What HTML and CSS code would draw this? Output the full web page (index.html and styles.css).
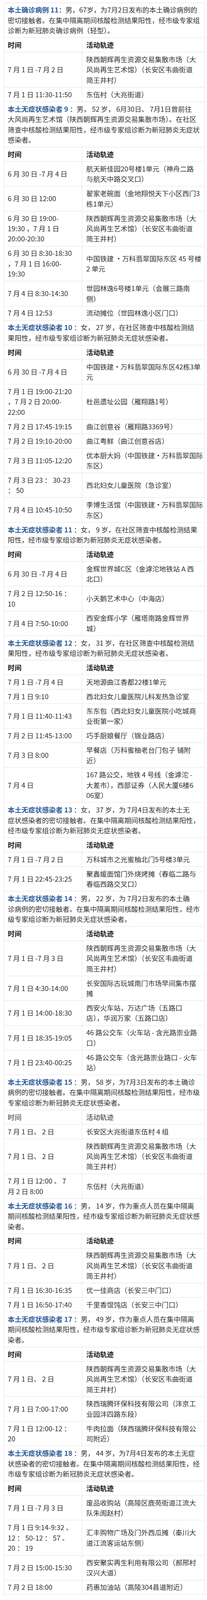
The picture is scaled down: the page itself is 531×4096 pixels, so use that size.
FILE: index.html
```html
<!DOCTYPE html>
<html lang="zh-CN">
<head>
<meta charset="utf-8">
<title>活动轨迹</title>
<link rel="stylesheet" href="styles.css">
</head>
<body>
<table class="trace">
<colgroup><col class="c-time"><col class="c-place"></colgroup>
<tbody>
<tr><td class="desc" colspan="2"><span class="tag">本土确诊病例 11</span>：男，67岁，为7月2日发布的本土确诊病例的<br>密切接触者。在集中隔离期间核酸检测结果阳性，经市级专家组<br>诊断为新冠肺炎确诊病例（轻型）。</td></tr>
<tr class="head"><td>时间</td><td class="place">活动轨迹</td></tr>
<tr><td>7 月 1 日 -7 月 2 日</td><td class="place">陕西朝辉再生资源交易集散市场（大<br>风尚再生艺术馆）（长安区韦曲街道<br>简王井村）</td></tr>
<tr><td>7 月 1 日 11:30-11:50</td><td class="place">东伍村（大兆街道）</td></tr>

<tr><td class="desc" colspan="2"><span class="tag">本土无症状感染者 9 </span>：男， 52 岁， 6月30日、 7月1日曾前往<br>大风尚再生艺术馆（陕西朝辉再生资源交易集散市场）。在社区<br>筛查中核酸检测结果阳性，经市级专家组诊断为新冠肺炎无症状<br>感染者。</td></tr>
<tr class="head"><td>时间</td><td class="place">活动轨迹</td></tr>
<tr><td>6 月 30 日 -7 月 4 日</td><td class="place">航天新佳园20号楼1单元（神舟二路<br>与航天中路交叉口）</td></tr>
<tr><td>6 月 30 日 12:00</td><td class="place">翟家老碗面（金地翔悦天下小区西门3<br>栋1单元）</td></tr>
<tr><td>6 月 30 日 19:00-<br>19:30 ，7 月 1 日<br>20:00-20:30</td><td class="place">陕西朝辉再生资源交易集散市场（大<br>风尚再生艺术馆）（长安区韦曲街道<br>简王井村）</td></tr>
<tr><td>6 月 30 日 8:30-18:30<br>，7 月 1 日 16:00-<br>19:30</td><td class="place">中国铁建 ·万科翡翠国际东区 45 号楼<br>2 单元</td></tr>
<tr><td>7 月 4 日 8:30-14:30</td><td class="place">世园林逸6号楼1单元（会展三路南<br>侧）</td></tr>
<tr><td>7 月 4 日 12:53</td><td class="place">流动摊位（世园林逸小区门口）</td></tr>

<tr><td class="desc" colspan="2"><span class="tag">本土无症状感染者 10 </span>：女， 27 岁，在社区筛查中核酸检测结<br>果阳性，经市级专家组诊断为新冠肺炎无症状感染者。</td></tr>
<tr class="head"><td>时间</td><td class="place">活动轨迹</td></tr>
<tr><td>6 月 30 日 -7 月 4 日</td><td class="place">中国铁建·万科翡翠国际东区42栋3单<br>元</td></tr>
<tr><td>7 月 1 日 19:00-21:20<br>，7 月 2 日 20:00-<br>22:00</td><td class="place">杜邑遗址公园（雁翔路1号）</td></tr>
<tr><td>7 月 2 日 17:45-19:15</td><td class="place">曲江创意谷（雁翔路3369号）</td></tr>
<tr><td>7 月 2 日 19:10-20:00</td><td class="place">曲江粤鲜（曲江创意谷店）</td></tr>
<tr><td>7 月 3 日 11:05-12:20</td><td class="place">优本厨大妈（中国铁建·万科翡翠国际<br>东区）</td></tr>
<tr><td>7 月 3 日 23 ： 30-23<br> ： 50</td><td class="place">西北妇女儿童医院（急诊室）</td></tr>
<tr><td>7 月 4 日 10:45-10:50</td><td class="place">李博生活馆（中国铁建·万科翡翠国际<br>东区）</td></tr>

<tr><td class="desc" colspan="2"><span class="tag">本土无症状感染者 11 </span>：女， 9 岁，在社区筛查中核酸检测结果<br>阳性，经市级专家组诊断为新冠肺炎无症状感染者。</td></tr>
<tr class="head"><td>时间</td><td class="place">活动轨迹</td></tr>
<tr><td>6 月 30 日 -7 月 4 日</td><td class="place">金辉世界城C区（金滹沱地铁站 A 西<br>北口）</td></tr>
<tr><td>7 月 2 日 12:50-16 ：<br>10</td><td class="place">小天鹅艺术中心（中海店）</td></tr>
<tr><td>7 月 4 日 7:50-10:00</td><td class="place">西安金辉小学（雁塔南路金辉世界<br>城）</td></tr>

<tr><td class="desc" colspan="2"><span class="tag">本土无症状感染者 12 </span>：女， 31 岁，在社区筛查中核酸检测结<br>果阳性，经市级专家组诊断为新冠肺炎无症状感染者。</td></tr>
<tr class="head"><td>时间</td><td class="place">活动轨迹</td></tr>
<tr><td>7 月 1 日 -7 月 4 日</td><td class="place">天地源曲江香都22楼1单元</td></tr>
<tr><td>7 月 1 日 9:10</td><td class="place">西北妇女儿童医院儿科发热急诊室</td></tr>
<tr><td>7 月 1 日 11:40-11:43</td><td class="place">东东包（西北妇女儿童医院小吃城商<br>业街第一家）</td></tr>
<tr><td>7 月 2 日 11:45-13:00</td><td class="place">巧手厨娘餐厅（锦业路店）</td></tr>
<tr><td>7 月 3 日 8:00</td><td class="place">早餐店（万科蜜柚老台门包子 铺附<br>近）</td></tr>
<tr><td>7 月 4 日</td><td class="place">167 路公交，地铁 4 号线（金滹沱 -<br>大差市），西部证券（人民大厦6楼6<br>06室）</td></tr>

<tr><td class="desc" colspan="2"><span class="tag">本土无症状感染者 13 </span>：女， 37 岁，为 7月4日发布的本土无<br>症状感染者的密切接触者。在集中隔离期间核酸检测结果阳性，<br>经市级专家组诊断为新冠肺炎无症状感染者。</td></tr>
<tr class="head"><td>时间</td><td class="place">活动轨迹</td></tr>
<tr><td>7 月 1 日 -7 月 2 日</td><td class="place">万科城市之光蜜柚北门5号楼3单元</td></tr>
<tr><td>7 月 1 日 22:45-23:25</td><td class="place">聚鑫媛面馆门外烧烤摊（春临二路与<br>春临西路交叉口）</td></tr>

<tr><td class="desc" colspan="2"><span class="tag">本土无症状感染者 14 </span>：男， 22 岁，为 7月2日发布的本土确<br>诊病例的密切接触者。在集中隔离期间核酸检测结果阳性，经市<br>级专家组诊断为新冠肺炎无症状感染者。</td></tr>
<tr class="head"><td>时间</td><td class="place">活动轨迹</td></tr>
<tr><td>7 月 1 日 -7 月 3 日</td><td class="place">陕西朝辉再生资源交易集散市场（大<br>风尚再生艺术馆）（长安区韦曲街道<br>简王井村）</td></tr>
<tr><td>7 月 1 日 4:30-14:00</td><td class="place">长安国际古玩城南门市场早间集市摆<br>摊</td></tr>
<tr><td>7 月 1 日 14:00-18:30</td><td class="place">西安火车站，万达广场（五路口<br>店），华润万家（五路口店）</td></tr>
<tr><td>7 月 1 日 18:35-19:05</td><td class="place">46 路公交车（火车站 - 含光路崇业路<br>口）</td></tr>
<tr><td>7 月 1 日 23:40-00:25</td><td class="place">46 路公交车（含光路崇业路口 - 火车<br>站）</td></tr>

<tr><td class="desc" colspan="2"><span class="tag">本土无症状感染者 15 </span>：男， 58 岁，为7月3日发布的本土确诊<br>病例的密切接触者。在集中隔离期间核酸检测结果阳性，经市级<br>专家组诊断为新冠肺炎无症状感染者。</td></tr>
<tr class="head plain"><td>时间</td><td class="place">活动轨迹</td></tr>
<tr><td>7 月 1 日、 2 日</td><td class="place">长安区大兆街道东伍村 4 组</td></tr>
<tr><td>7 月 1 日、 2 日</td><td class="place">陕西朝辉再生资源交易集散市场（大<br>风尚再生艺术馆）（长安区韦曲街道<br>简王井村）</td></tr>
<tr><td>7 月 1 日 12:00 、 7<br>月 2 日 8:00</td><td class="place">东伍村（大兆街道）</td></tr>

<tr><td class="desc" colspan="2"><span class="tag">本土无症状感染者 16 </span>：男， 14 岁，作为重点人员在集中隔离<br>期间核酸检测结果阳性，经市级专家组诊断为新冠肺炎无症状感<br>染者。</td></tr>
<tr class="head"><td>时间</td><td class="place">活动轨迹</td></tr>
<tr><td>7 月 1 日、 2 日</td><td class="place">陕西朝辉再生资源交易集散市场（大<br>风尚再生艺术馆）（长安区韦曲街道<br>简王井村）</td></tr>
<tr><td>7 月 1 日 16:30-16:35</td><td class="place">优一佳商店（长安三中门口）</td></tr>
<tr><td>7 月 1 日 16:50-17:40</td><td class="place">千里香馄饨店（长安三中门口）</td></tr>

<tr><td class="desc" colspan="2"><span class="tag">本土无症状感染者 17 </span>：男， 49 岁，作为重点人员在集中隔离<br>期间核酸检测结果阳性，经市级专家组诊断为新冠肺炎无症状感<br>染者。</td></tr>
<tr class="head"><td>时间</td><td class="place">活动轨迹</td></tr>
<tr><td>7 月 1 日、 2 日</td><td class="place">陕西朝辉再生资源交易集散市场（大<br>风尚再生艺术馆）（长安区韦曲街道<br>简王井村）</td></tr>
<tr><td>7 月 1 日 7:00-17:00</td><td class="place">陕西瑞腾环保科技有限公司（沣京工<br>业园沣四路东段）</td></tr>
<tr><td>7 月 1 日 12:00-12 ：<br>20</td><td class="place">牛肉拉面（陕西瑞腾环保科技有限公<br>司附近）</td></tr>

<tr><td class="desc" colspan="2"><span class="tag">本土无症状感染者 18 </span>：男， 44 岁，为7月4日发布的本土无症<br>状感染者的密切接触者。在集中隔离期间核酸检测结果阳性，经<br>市级专家组诊断为新冠肺炎无症状感染者。</td></tr>
<tr class="head"><td>时间</td><td class="place">活动轨迹</td></tr>
<tr><td>7 月 1 日 -7 月 3 日</td><td class="place">废品收购站（高陵区鹿苑街道江流大<br>队朱阂赵村）</td></tr>
<tr><td>7 月 1 日 9:14-9:32 、<br>12 ： 50-12 ： 57 、<br>20 ： 19</td><td class="place">汇丰购物广场及门外西瓜摊（秦川大<br>道江流客运站东侧）</td></tr>
<tr><td>7 月 2 日 15:00-15:30</td><td class="place">西安聚实再生利用有限公司（郝邢村<br>汉兴大道）</td></tr>
<tr><td>7 月 2 日 18:00</td><td class="place">药惠加油站（高陵304县道附近）</td></tr>
</tbody>
</table>
</body>
</html>
```

FILE: styles.css
```css
html, body {
  background: #ffffff;
}
body {
  margin: 6.6px 6px 0 9.5px;
  font-family: "Noto Sans CJK SC", "Noto Sans", sans-serif;
  font-size: 17.6px;
  color: #333333;
}
.trace {
  width: 515px;
  border-collapse: collapse;
  table-layout: fixed;
}
.c-time {
  width: 200.5px;
}
.trace td {
  border: 1px solid #e3e3e3;
  padding: 4.73px 2px 4.73px 9.3px;
  line-height: 26.46px;
  vertical-align: middle;
  white-space: nowrap;
  overflow: visible;
}
.trace td.place {
  padding-left: 10.3px;
}
.trace td.desc {
  padding-left: 9.3px;
}
.tag {
  color: #2f5d98;
  font-weight: bold;
}
.head td {
  font-weight: bold;
  color: #222222;
}
.head.plain td {
  font-weight: normal;
  color: #333333;
}
```
